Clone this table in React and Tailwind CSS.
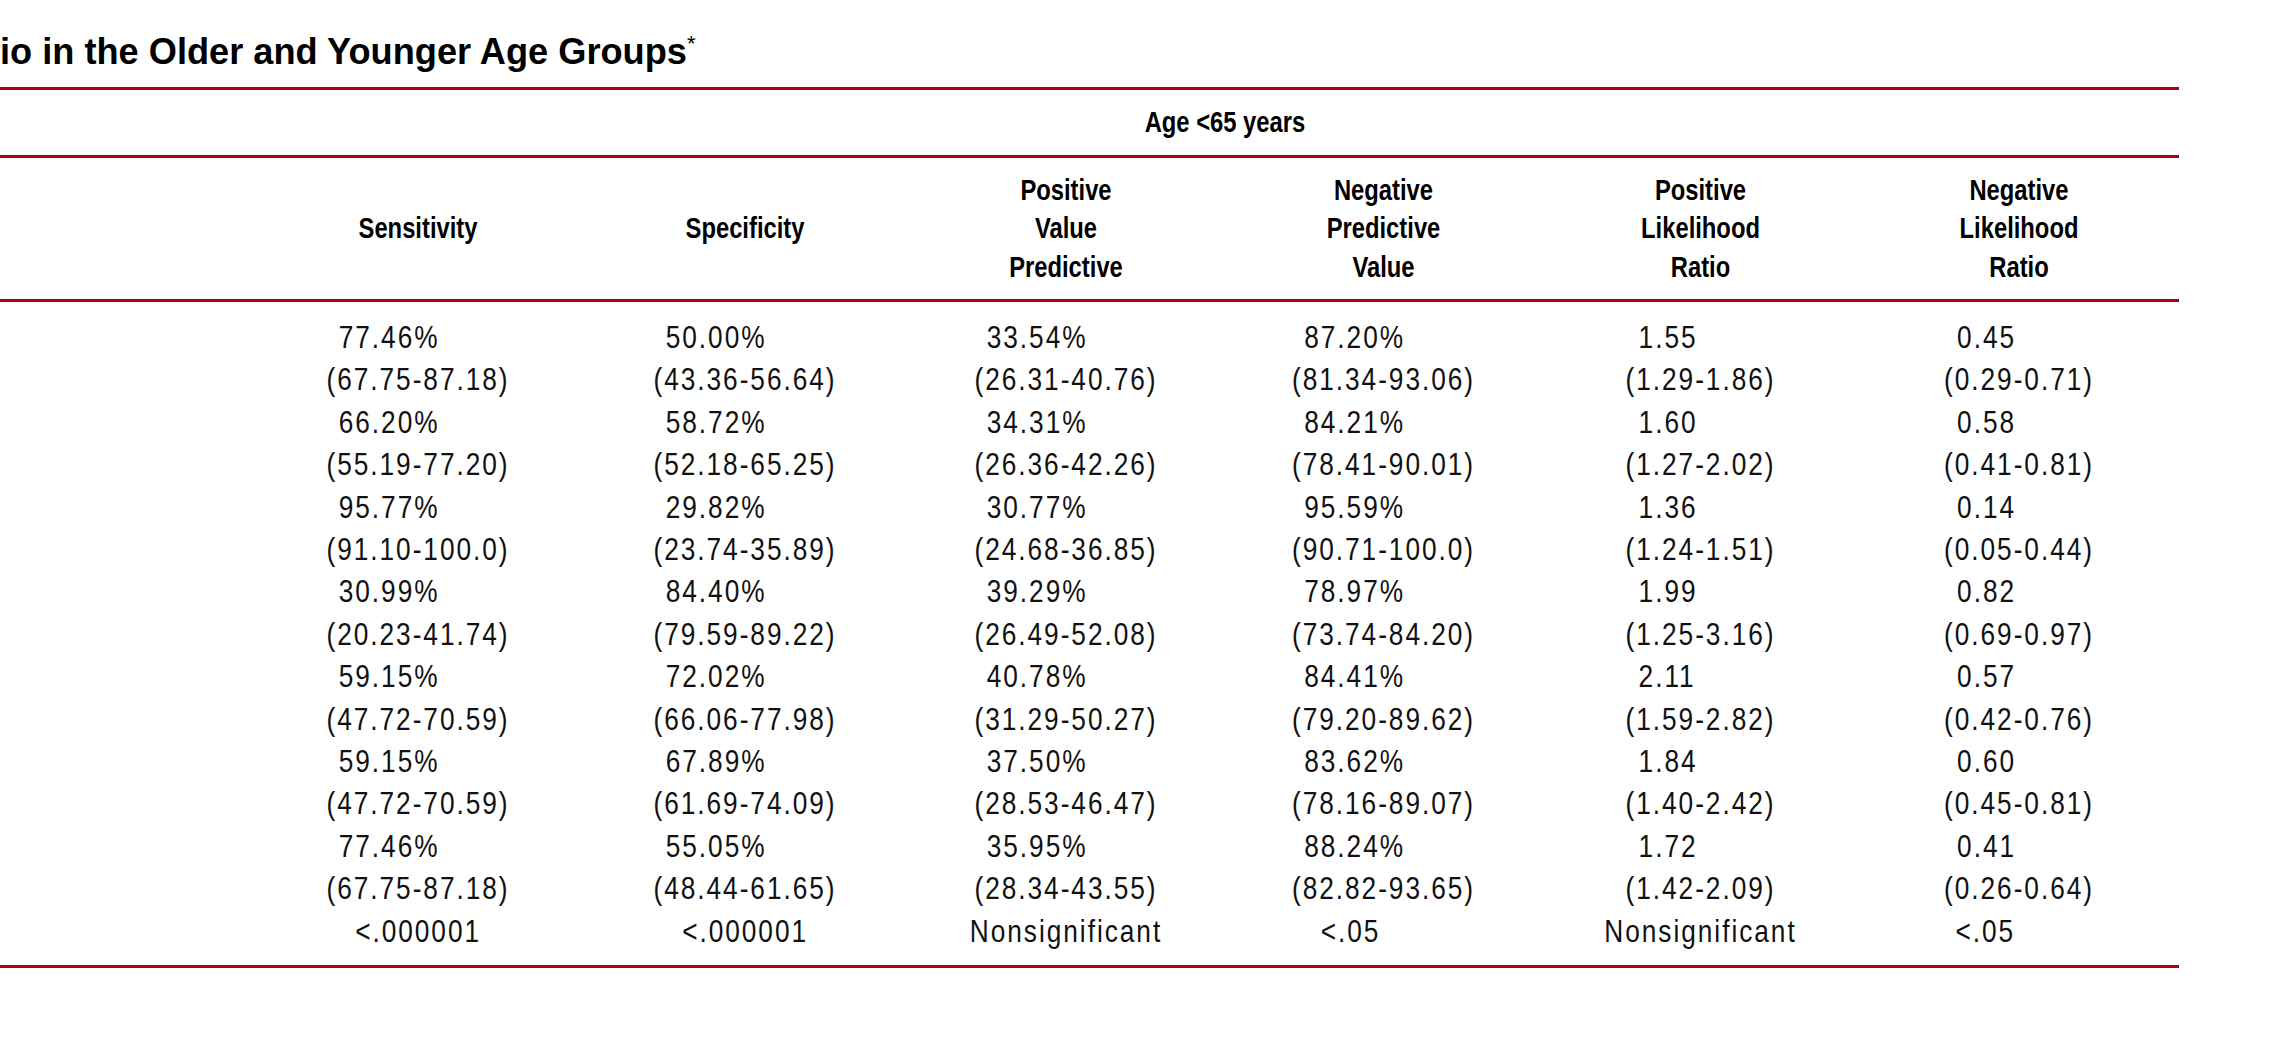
// Table: sensitivity / specificity / likelihood ratios, age <65 years
const cols = [
  {
    head: ['Sensitivity'],
    pad: 'pl-[15px]',
    ppad: 'pl-[35px]',
    vals: [
      ['77.46%', '(67.75-87.18)'],
      ['66.20%', '(55.19-77.20)'],
      ['95.77%', '(91.10-100.0)'],
      ['30.99%', '(20.23-41.74)'],
      ['59.15%', '(47.72-70.59)'],
      ['59.15%', '(47.72-70.59)'],
      ['77.46%', '(67.75-87.18)'],
    ],
    p: '<.000001',
  },
  {
    head: ['Specificity'],
    pad: 'pl-[15px]',
    ppad: 'pl-[35px]',
    vals: [
      ['50.00%', '(43.36-56.64)'],
      ['58.72%', '(52.18-65.25)'],
      ['29.82%', '(23.74-35.89)'],
      ['84.40%', '(79.59-89.22)'],
      ['72.02%', '(66.06-77.98)'],
      ['67.89%', '(61.69-74.09)'],
      ['55.05%', '(48.44-61.65)'],
    ],
    p: '<.000001',
  },
  {
    head: ['Positive', 'Value', 'Predictive'],
    pad: 'pl-[15px]',
    vals: [
      ['33.54%', '(26.31-40.76)'],
      ['34.31%', '(26.36-42.26)'],
      ['30.77%', '(24.68-36.85)'],
      ['39.29%', '(26.49-52.08)'],
      ['40.78%', '(31.29-50.27)'],
      ['37.50%', '(28.53-46.47)'],
      ['35.95%', '(28.34-43.55)'],
    ],
    p: 'Nonsignificant',
  },
  {
    head: ['Negative', 'Predictive', 'Value'],
    pad: 'pl-[15px]',
    ppad: 'pl-[35px]',
    vals: [
      ['87.20%', '(81.34-93.06)'],
      ['84.21%', '(78.41-90.01)'],
      ['95.59%', '(90.71-100.0)'],
      ['78.97%', '(73.74-84.20)'],
      ['84.41%', '(79.20-89.62)'],
      ['83.62%', '(78.16-89.07)'],
      ['88.24%', '(82.82-93.65)'],
    ],
    p: '<.05',
  },
  {
    head: ['Positive', 'Likelihood', 'Ratio'],
    pad: 'pl-[16px]',
    vals: [
      ['1.55', '(1.29-1.86)'],
      ['1.60', '(1.27-2.02)'],
      ['1.36', '(1.24-1.51)'],
      ['1.99', '(1.25-3.16)'],
      ['2.11', '(1.59-2.82)'],
      ['1.84', '(1.40-2.42)'],
      ['1.72', '(1.42-2.09)'],
    ],
    p: 'Nonsignificant',
  },
  {
    head: ['Negative', 'Likelihood', 'Ratio'],
    pad: 'pl-[16px]',
    ppad: 'pl-[14px]',
    vals: [
      ['0.45', '(0.29-0.71)'],
      ['0.58', '(0.41-0.81)'],
      ['0.14', '(0.05-0.44)'],
      ['0.82', '(0.69-0.97)'],
      ['0.57', '(0.42-0.76)'],
      ['0.60', '(0.45-0.81)'],
      ['0.41', '(0.26-0.64)'],
    ],
    p: '<.05',
  },
]

const grid = 'grid grid-cols-[253px_330px_324px_318px_317px_317px_320px]'

function Rule() {
  return <div className="h-[3px] bg-[#b00012]" />
}

export default function App() {
  return (
    <div className="w-[2284px] h-[1056px] bg-white text-black overflow-hidden font-['Liberation_Sans',Arial,sans-serif]">
      <h1 className="pt-[34px] h-[70px] text-[36.2px] leading-[36px] font-bold whitespace-nowrap">
        io in the Older and Younger Age Groups
        <span className="relative -top-[13px] text-[22px] leading-none font-normal">*</span>
      </h1>

      <div className="w-[2179px] mt-[17px]">
        <Rule />

        {/* spanning group header */}
        <div className={`${grid} h-[65px]`}>
          <div className="col-start-2 col-end-8 flex items-center justify-center pl-[18px] text-[29px] leading-[29px] font-bold">
            <span className="scale-x-[0.82]">Age &lt;65 years</span>
          </div>
        </div>

        <Rule />

        {/* column heads */}
        <div className={`${grid} h-[141px] items-center`}>
          <div />
          {cols.map((c, i) => (
            <div key={i} className="text-center text-[29px] leading-[38.5px] font-bold scale-x-[0.82]">
              {c.head.map(h => (
                <div key={h}>{h}</div>
              ))}
            </div>
          ))}
        </div>

        <Rule />

        {/* body */}
        <div className={`${grid} pt-[14px] pb-[13px] text-[32px] leading-[42.4px] tracking-[2.4px] text-[#111]`}>
          <div />
          {cols.map((c, i) => (
            <div key={i} className="flex flex-col items-center scale-x-[0.82]">
              <div className="text-left">
                {c.vals.map(([v, ci], j) => (
                  <div key={j}>
                    <div className={c.pad}>{v}</div>
                    <div>{ci}</div>
                  </div>
                ))}
                {c.ppad && <div className={c.ppad}>{c.p}</div>}
              </div>
              {!c.ppad && <div className="text-center">{c.p}</div>}
            </div>
          ))}
        </div>

        <Rule />
      </div>
    </div>
  )
}
